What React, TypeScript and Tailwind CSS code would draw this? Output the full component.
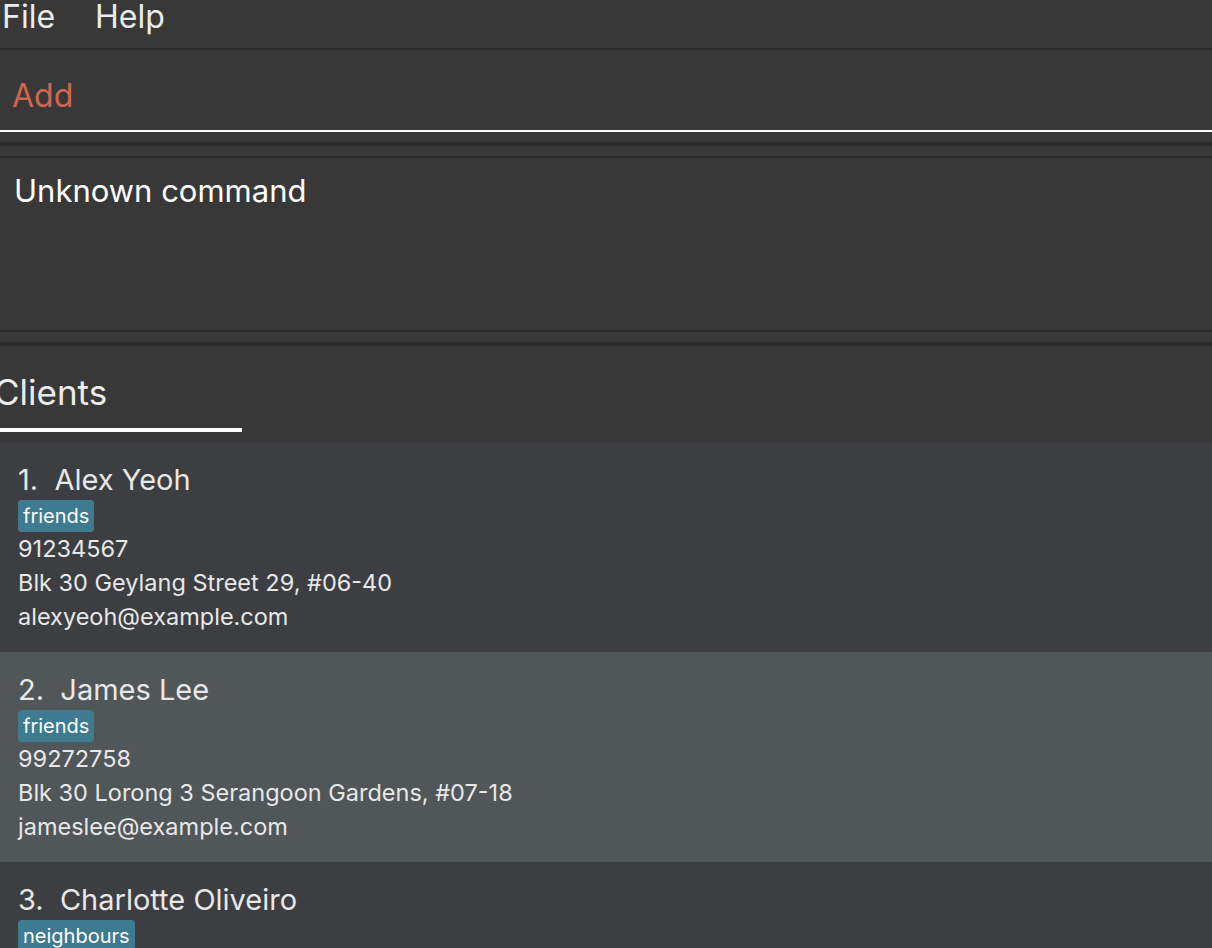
import React from 'react';

interface Client {
  name: string;
  tags: string[];
  phone: string;
  address: string;
  email: string;
}

const clients: Client[] = [
  {
    name: 'Alex Yeoh',
    tags: ['friends'],
    phone: '91234567',
    address: 'Blk 30 Geylang Street 29, #06-40',
    email: 'alexyeoh@example.com',
  },
  {
    name: 'James Lee',
    tags: ['friends'],
    phone: '99272758',
    address: 'Blk 30 Lorong 3 Serangoon Gardens, #07-18',
    email: 'jameslee@example.com',
  },
  {
    name: 'Charlotte Oliveiro',
    tags: ['neighbours'],
    phone: '93210283',
    address: 'Blk 11 Ang Mo Kio Street 74, #11-04',
    email: 'charlotte@example.com',
  },
];

function ClientCard({ client, index }: { client: Client; index: number }) {
  const odd = index % 2 === 1;
  return (
    <div
      className={
        'shrink-0 h-[210px] pt-5 pl-[18px] text-[#e8e8e8] ' +
        (odd ? 'bg-[#515658]' : 'bg-[#3c3e41]')
      }
    >
      {/* Name */}
      <div className="text-[29px] leading-[36px] whitespace-pre">
        {index + 1}.  {client.name}
      </div>

      {/* Tags */}
      <div className="flex gap-2 mt-[2px]">
        {client.tags.map((tag) => (
          <span
            key={tag}
            className="h-8 px-[5px] rounded-[4px] bg-[#3e7b91] text-white text-[20px] leading-8"
          >
            {tag}
          </span>
        ))}
      </div>

      {/* Details */}
      <div className="text-[23.5px] leading-[34px]">
        <div>{client.phone}</div>
        <div>{client.address}</div>
        <div>{client.email}</div>
      </div>
    </div>
  );
}

export default function App() {
  return (
    <div
      className="w-[1212px] h-[948px] overflow-hidden flex flex-col bg-[#383838]"
      style={{ fontFamily: 'Inter, "Noto Sans", sans-serif' }}
    >
      {/* Menu bar */}
      <div className="h-[50px] shrink-0 flex gap-[40px] pl-[2px] text-[32px] leading-[34px] text-[#ececec] border-b-2 border-[#2b2b2b]">
        <span>File</span>
        <span>Help</span>
      </div>

      {/* Command box */}
      <div className="h-[82px] shrink-0 pt-[26px] pl-[12px] text-[32px] leading-[40px] text-[#d06651] border-b-2 border-white">
        Add
      </div>

      {/* Separator */}
      <div className="h-[10px] shrink-0" />
      <div className="h-1 shrink-0 bg-[#2b2b2b]" />
      <div className="h-[10px] shrink-0" />
      <div className="h-[2px] shrink-0 bg-[#2b2b2b]" />

      {/* Result display */}
      <div className="h-[172px] shrink-0 pt-[13px] pl-[14px] text-[31px] leading-[40px] text-white">
        Unknown command
      </div>

      <div className="h-[2px] shrink-0 bg-[#2b2b2b]" />
      <div className="h-[10px] shrink-0" />
      <div className="h-1 shrink-0 bg-[#2b2b2b]" />

      {/* Clients tab header */}
      <div className="h-[96px] shrink-0 pt-[24px]">
        <div className="-ml-[6px] text-[35px] leading-[44px] text-[#ececec]">Clients</div>
        <div className="mt-[14px] w-[242px] h-1 bg-white" />
      </div>

      {/* Client list */}
      <div className="flex flex-col">
        {clients.map((c, i) => (
          <ClientCard key={c.name} client={c} index={i} />
        ))}
      </div>
    </div>
  );
}
